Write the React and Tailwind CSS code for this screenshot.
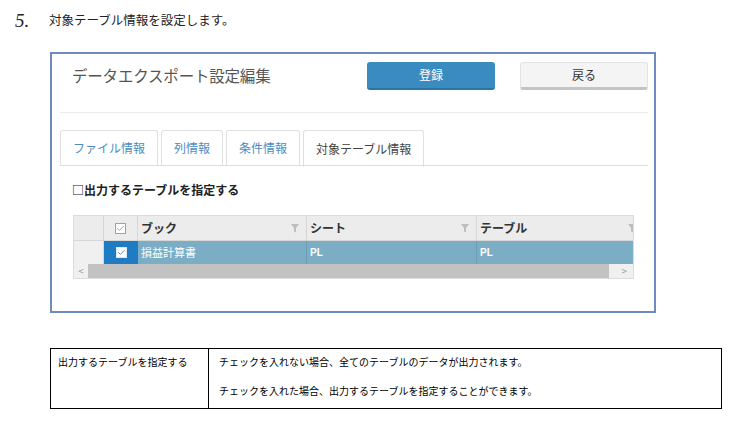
import { Check } from "lucide-react";

function Funnel({ className = "" }) {
    return (
        <svg viewBox="0 0 8 9" className={"w-[8px] h-[9px] " + className}>
            <path d="M0 0 H8 L5 4 V8.5 L3 7.5 V4 Z" fill="#bdbdbd" />
        </svg>
    );
}

function Box({ dark }) {
    return (
        <span
            className={
                "w-[11px] h-[11px] flex items-center justify-center border " +
                (dark ? "bg-white border-[#dde9f2]" : "bg-white border-[#a0a0a0]")
            }
        >
            <Check size={9} strokeWidth={2} className={dark ? "text-[#4a6f8c]" : "text-[#888]"} />
        </span>
    );
}

const tabs = ["ファイル情報", "列情報", "条件情報", "対象テーブル情報"];

export default function App() {
    return (
        <div className="w-[736px] h-[425px] bg-white font-['Noto_Sans_CJK_JP','Noto_Sans',sans-serif] text-[#222] overflow-hidden">
            <div className="flex items-center pt-[10px] h-[30px]">
                <span className="w-[49px] pl-[15px] font-['Liberation_Serif',serif] italic text-[19px] leading-none">
                    5.
                </span>
                <span className="text-[12.5px] leading-none">対象テーブル情報を設定します。</span>
            </div>

            <div className="ml-[50px] mt-[22px] w-[606px] h-[261px] border-2 border-[#6b8cbd] pl-[8px] pr-[6px]">
                <div className="flex items-start h-[59px] pt-[8px] border-b border-[#ececec]">
                    <h1 className="pl-[12px] pt-[3px] text-[15.5px] leading-[20px] text-[#555] tracking-[-0.2px]">
                        データエクスポート設定編集
                    </h1>
                    <button className="ml-auto w-[128px] h-[28px] rounded-[3px] bg-[#3a8cc0] border-b-2 border-[#2d73a3] text-white text-[12px]">
                        登録
                    </button>
                    <button className="ml-[25px] w-[128px] h-[28px] rounded-[3px] bg-[#f4f4f4] border border-[#e2e2e2] border-b-[3px] border-b-[#c4c4c4] text-[#333] text-[12px]">
                        戻る
                    </button>
                </div>

                <div className="mt-[17px] flex gap-[3px] border-b border-[#dddddd] h-[36px]">
                    {tabs.map((t, i) => {
                        const active = i === tabs.length - 1;
                        return (
                            <div
                                key={t}
                                className={
                                    "px-[12px] flex items-center text-[12px] rounded-t-[3px] border border-[#e0e0e0] " +
                                    (active
                                        ? "text-[#444] border-b-white -mb-px h-[37px]"
                                        : "text-[#4b8dbd] border-b-0")
                                }
                            >
                                {t}
                            </div>
                        );
                    })}
                </div>

                <div className="mt-[16px] pl-[12px] text-[12px] font-bold leading-[16px] text-[#222]">
                    □出力するテーブルを指定する
                </div>

                <div className="mt-[17px] ml-[13px] w-[561px] border border-[#dcdcdc] text-[12px]">
                    <div className="flex h-[24px] bg-[#ececec]">
                        <div className="w-[30px] border-r border-[#d6d6d6]" />
                        <div className="w-[34px] border-r border-[#d6d6d6] flex items-center justify-center">
                            <Box />
                        </div>
                        <div className="w-[169px] border-r border-[#d6d6d6] flex items-center px-[3px] font-bold text-[#333]">
                            ブック
                            <Funnel className="ml-auto mr-[4px]" />
                        </div>
                        <div className="w-[170px] border-r border-[#d6d6d6] flex items-center px-[3px] font-bold text-[#333]">
                            シート
                            <Funnel className="ml-auto mr-[4px]" />
                        </div>
                        <div className="flex-1 flex items-center px-[3px] font-bold text-[#333] overflow-hidden">
                            テーブル
                            <Funnel className="ml-auto -mr-[6px]" />
                        </div>
                    </div>
                    <div className="flex h-[24px] border-t border-[#d6d6d6]">
                        <div className="w-[30px] bg-[#f0f0f0] border-r border-[#d6d6d6]" />
                        <div className="w-[34px] bg-[#1f7bc2] flex items-center justify-center">
                            <Box dark />
                        </div>
                        <div className="w-[169px] bg-[#7badc4] border-r border-[#6c9db4] flex items-center px-[3px] text-[11px] text-white">
                            損益計算書
                        </div>
                        <div className="w-[170px] bg-[#7badc4] border-r border-[#6c9db4] flex items-center px-[3px] text-[10px] font-bold text-white font-['Liberation_Sans',sans-serif]">
                            PL
                        </div>
                        <div className="flex-1 bg-[#7badc4] flex items-center px-[3px] text-[10px] font-bold text-white font-['Liberation_Sans',sans-serif]">
                            PL
                        </div>
                    </div>
                    <div className="flex h-[14px] bg-[#f0f0f0] text-[10px] leading-none text-[#999]">
                        <div className="w-[14px] flex items-center justify-center">&lt;</div>
                        <div className="w-[521px] bg-[#c2c2c2]" />
                        <div className="flex-1 flex items-center justify-end pr-[6px]">&gt;</div>
                    </div>
                </div>
            </div>

            <table className="mt-[35px] ml-[50px] w-[672px] h-[61px] border-collapse text-[10px] leading-[13px] text-black">
                <tbody>
                    <tr>
                        <td className="w-[158px] border border-black align-top pl-[7px] pt-[6px]">
                            出力するテーブルを指定する
                        </td>
                        <td className="border border-black align-top pl-[10px] pt-[6px]">
                            <p>チェックを入れない場合、全てのテーブルのデータが出力されます。</p>
                            <p className="mt-[16px]">チェックを入れた場合、出力するテーブルを指定することができます。</p>
                        </td>
                    </tr>
                </tbody>
            </table>
        </div>
    );
}
